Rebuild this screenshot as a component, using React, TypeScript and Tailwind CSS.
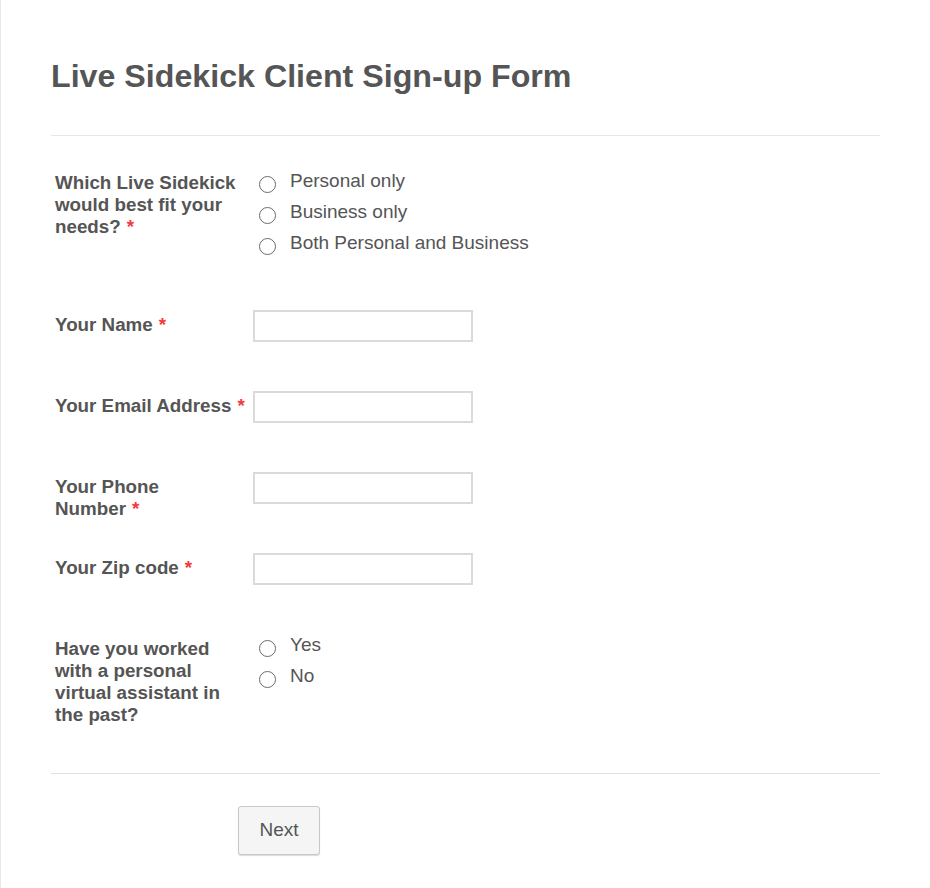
import React from "react";

const font = { fontFamily: '"Liberation Sans", Arial, sans-serif' };

function Req() {
  return <span className="text-[#f23a3c] ml-1.5">*</span>;
}

function Radio({ label }: { label: string }) {
  return (
    <label className="flex items-center h-[31px] text-[19px] text-[#555]">
      <span className="w-[17px] h-[17px] rounded-full border border-[#6b6b6b] bg-white ml-[6px] mr-[14px] mt-[3px] shrink-0" />
      <span className="-mt-[3px]">{label}</span>
    </label>
  );
}

function Field({ label }: { label: React.ReactNode }) {
  return (
    <div className="flex pl-[54px] h-[81px]">
      <div className="w-[198px] pr-[6px] text-[18.8px] leading-[22px] font-bold text-[#555] pt-[4px]">{label}</div>
      <div className="w-[220px] h-[32px] border-2 border-[#dadada] bg-white" />
    </div>
  );
}

export default function App() {
  return (
    <div style={font} className="w-[930px] h-[888px] bg-white border-l border-[#e8e8e8] overflow-hidden">
      <div className="px-[50px] pt-[57px]">
        <h1 className="text-[32.2px] leading-[38px] font-bold text-[#555]">Live Sidekick Client Sign-up Form</h1>
      </div>
      <div className="mx-[50px] mt-[40px] border-t border-[#e6e6e6] w-[829px]" />

      <div className="flex pl-[54px] pt-[31px] h-[174px]">
        <div className="w-[198px] pr-[6px] text-[18.8px] leading-[22px] font-bold text-[#555] pt-[5px]">
          Which Live Sidekick would best fit your needs?<Req />
        </div>
        <div className="flex flex-col">
          <Radio label="Personal only" />
          <Radio label="Business only" />
          <Radio label="Both Personal and Business" />
        </div>
      </div>

      <Field label={<>Your Name<Req /></>} />
      <Field label={<>Your Email Address<Req /></>} />
      <Field label={<>Your Phone Number<Req /></>} />
      <Field label={<>Your Zip code<Req /></>} />

      <div className="flex pl-[54px] h-[139px]">
        <div className="w-[198px] pr-[6px] text-[18.8px] leading-[22px] font-bold text-[#555] pt-[4px]">
          Have you worked with a personal virtual assistant in the past?
        </div>
        <div className="flex flex-col -mt-[3px]">
          <Radio label="Yes" />
          <Radio label="No" />
        </div>
      </div>

      <div className="mx-[50px] border-t border-[#e0e0e0] w-[829px]" />

      <div className="pl-[237px] pt-[32px]">
        <button className="w-[82px] h-[49px] rounded-[3px] border border-[#c8c8c8] bg-[#f5f5f5] shadow-[0_1px_1px_rgba(0,0,0,0.15)] text-[19px] text-[#555]">
          Next
        </button>
      </div>
    </div>
  );
}
